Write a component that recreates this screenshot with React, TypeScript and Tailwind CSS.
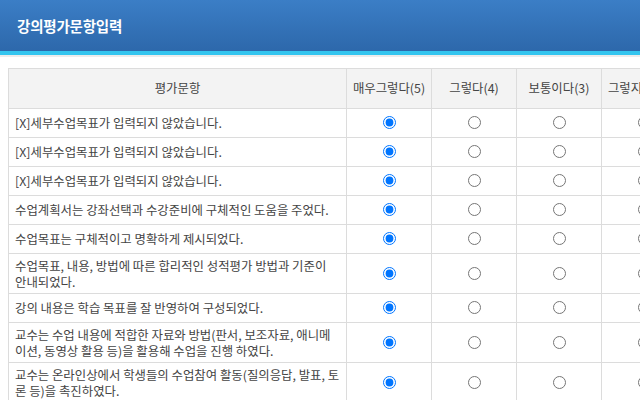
import React from "react";

const rows: string[][] = [
  ["[X]세부수업목표가 입력되지 않았습니다."],
  ["[X]세부수업목표가 입력되지 않았습니다."],
  ["[X]세부수업목표가 입력되지 않았습니다."],
  ["수업계획서는 강좌선택과 수강준비에 구체적인 도움을 주었다."],
  ["수업목표는 구체적이고 명확하게 제시되었다."],
  ["수업목표, 내용, 방법에 따른 합리적인 성적평가 방법과 기준이", "안내되었다."],
  ["강의 내용은 학습 목표를 잘 반영하여 구성되었다."],
  ["교수는 수업 내용에 적합한 자료와 방법(판서, 보조자료, 애니메", "이션, 동영상 활용 등)을 활용해 수업을 진행 하였다."],
  ["교수는 온라인상에서 학생들의 수업참여 활동(질의응답, 발표, 토", "론 등)을 촉진하였다."],
];

const cols = ["매우그렇다(5)", "그렇다(4)", "보통이다(3)", "그렇지않다(2)", "전혀그렇지않다(1)"];

export default function App() {
  return (
    <div
      className="w-[640px] h-[400px] overflow-hidden bg-white"
      style={{ fontFamily: '"Noto Sans CJK KR", "Noto Sans", sans-serif' }}
    >
      <div className="h-[51px] bg-gradient-to-b from-[#3b7ec6] to-[#2d68ab] flex items-center pl-[17px]">
        <h1 className="text-white text-[14.5px] font-bold tracking-[-0.2px]">강의평가문항입력</h1>
      </div>
      <div className="h-[4px] bg-[#34c5ef]" />
      <div className="h-[2px] bg-[#ececec]" />
      <div className="pt-[11px] pl-[8px]">
        <table className="table-fixed border-collapse text-[12.4px] text-[#444] w-[763px]">
          <colgroup>
            <col className="w-[338px]" />
            <col className="w-[85px]" />
            <col className="w-[85px]" />
            <col className="w-[85px]" />
            <col className="w-[85px]" />
            <col className="w-[85px]" />
          </colgroup>
          <thead>
            <tr className="h-[40px] bg-[#f3f3f3]">
              <th className="border border-[#dcdcdc] font-normal text-center">평가문항</th>
              {cols.map((c) => (
                <th key={c} className="border border-[#dcdcdc] font-normal text-center whitespace-nowrap">
                  {c}
                </th>
              ))}
            </tr>
          </thead>
          <tbody>
            {rows.map((r, i) => (
              <tr key={i} className="h-[29px]">
                <td className="border border-[#dcdcdc] px-[6px] py-[3.5px] leading-[16px]">
                  {r.map((line, j) => (
                    <div key={j} className="whitespace-nowrap">{line}</div>
                  ))}
                </td>
                {cols.map((c, k) => (
                  <td key={c} className="border border-[#dcdcdc] align-middle p-0">
                    <input
                      type="radio"
                      name={`q${i}`}
                      defaultChecked={k === 0}
                      className="block w-[13px] h-[13px] mx-auto mt-0 mb-[1px]"
                    />
                  </td>
                ))}
              </tr>
            ))}
          </tbody>
        </table>
      </div>
    </div>
  );
}
